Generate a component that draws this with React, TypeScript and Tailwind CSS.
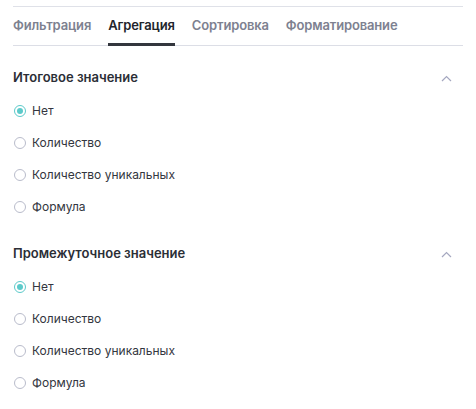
import { useState } from "react"

const tabs = ["Фильтрация", "Агрегация", "Сортировка", "Форматирование"]
const options = ["Нет", "Количество", "Количество уникальных", "Формула"]

function Radio({ checked, label, onClick }: { checked: boolean; label: string; onClick: () => void }) {
  return (
    <label onClick={onClick} className="flex items-center h-[32px] cursor-pointer">
      <span
        className={
          checked
            ? "w-[12px] h-[12px] rounded-full border border-[#5ccaca] flex items-center justify-center ml-[14px]"
            : "w-[12px] h-[12px] rounded-full border border-[#b9bccb] ml-[14px]"
        }
      >
        {checked && <span className="w-[6px] h-[6px] rounded-full bg-[#5ccaca]" />}
      </span>
      <span className="ml-[6px] text-[12px] text-[#333640]">{label}</span>
    </label>
  )
}

function Section({ title }: { title: string }) {
  const [value, setValue] = useState(0)
  return (
    <div>
      <div className="flex items-center justify-between h-[28px] pl-[13px] pr-[24px]">
        <h3 className="text-[13px] font-semibold text-[#2b2e36]">{title}</h3>
        <svg width="11" height="7" viewBox="0 0 11 7" fill="none">
          <path d="M1 6L5.5 1.5L10 6" stroke="#a5a8c0" strokeWidth="1.2" />
        </svg>
      </div>
      <div className="mt-[3px]">
        {options.map((o, i) => (
          <Radio key={o} label={o} checked={value === i} onClick={() => setValue(i)} />
        ))}
      </div>
    </div>
  )
}

export default function App() {
  const [tab, setTab] = useState(1)
  return (
    <div className="w-[476px] h-[409px] bg-white overflow-hidden" style={{ fontFamily: "Inter, 'Noto Sans', sans-serif" }}>
      <div className="mx-[13px] mt-[6px] border-t border-[#dfe1e8]">
        <div className="flex gap-[17px] border-b border-[#dcdee6] h-[39px]">
          {tabs.map((t, i) => (
            <button
              key={t}
              onClick={() => setTab(i)}
              className={
                i === tab
                  ? "text-[13px] font-semibold tracking-[-0.15px] text-[#22252c] border-b-[3px] border-[#33363d] pt-[1px] -mb-[1px]"
                  : "text-[13px] font-semibold tracking-[-0.15px] text-[#7d8190] border-b-[3px] border-transparent pt-[1px] -mb-[1px]"
              }
            >
              {t}
            </button>
          ))}
        </div>
      </div>
      <div className="mt-[18px]">
        <Section title="Итоговое значение" />
      </div>
      <div className="mt-[17px]">
        <Section title="Промежуточное значение" />
      </div>
    </div>
  )
}
